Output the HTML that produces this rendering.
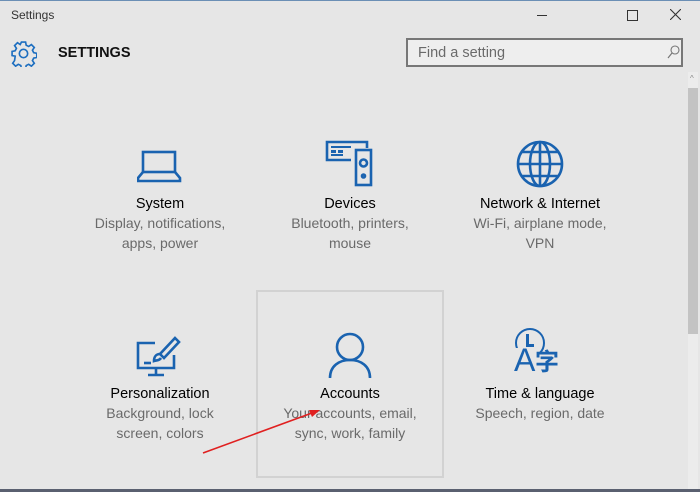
<!DOCTYPE html>
<html><head><style>
body{margin:0;width:700px;height:492px;background:#e6e6e6;font-family:"Liberation Sans","DejaVu Sans",sans-serif;position:relative;overflow:hidden}
.a{position:absolute}
.t{position:absolute;width:190px;text-align:center;font-size:14.5px;line-height:19px;color:#000}
.t span{color:#6a6a6a;font-size:14px}
</style></head><body>
<div class="a" style="left:0;top:0;width:700px;height:1px;background:#6b8fb5"></div>
<div class="a" style="left:11px;top:8px;font-size:12px;color:#333">Settings</div>
<div class="a" style="left:537px;top:15px;width:10px;height:1px;background:#333"></div>
<div class="a" style="left:627px;top:10px;width:9px;height:9px;border:1px solid #333"></div>
<svg class="a" style="left:670px;top:9px" width="11" height="11"><path d="M0 0L11 11M11 0L0 11" stroke="#333" stroke-width="1.1"/></svg>
<svg class="a" style="left:10px;top:40px" width="27" height="27" viewBox="0 0 26 26"><g fill="none" stroke="#1e6fc0" stroke-width="1.6"><path d="M11 2h4l.6 3 2.4 1.2 2.6-1.8 2.8 2.8-1.8 2.6 1.2 2.4 3 .6v4l-3 .6-1.2 2.4 1.8 2.6-2.8 2.8-2.6-1.8-2.4 1.2-.6 3h-4l-.6-3-2.4-1.2-2.6 1.8-2.8-2.8 1.8-2.6L5 15.6l-3-.6v-4l3-.6 1.2-2.4-1.8-2.6 2.8-2.8 2.6 1.8L11 2z"/><circle cx="13" cy="13" r="4"/></g></svg>
<div class="a" style="left:58px;top:45px;font-size:14.5px;font-weight:bold;color:#111">SETTINGS</div>
<div class="a" style="left:406px;top:38px;width:277px;height:29px;box-sizing:border-box;border:2px solid #777;background:#eee"></div>
<div class="a" style="left:418px;top:45px;font-size:14.5px;color:#6a6a6a">Find a setting</div>
<svg class="a" style="left:667px;top:45px" width="13" height="14"><circle cx="8" cy="5" r="4" fill="none" stroke="#777" stroke-width="1.1"/><path d="M5 8L1 13" stroke="#777" stroke-width="1.2"/></svg>
<div class="a" style="left:688px;top:72px;width:10px;height:418px;background:#ececec"></div>
<div class="a" style="left:688px;top:88px;width:10px;height:246px;background:#c3c3c3"></div>
<div class="a" style="left:690px;top:74px;font-size:8px;color:#888">^</div>
<div class="a" style="left:0;top:489px;width:700px;height:3px;background:#5a6070"></div>
<div class="a" style="left:256px;top:290px;width:188px;height:188px;box-sizing:border-box;border:2px solid #d2d2d2"></div>
<svg class="a" style="left:137px;top:148px" width="46" height="36"><g fill="none" stroke="#1a63b0" stroke-width="2.6"><rect x="6" y="4" width="32" height="20"/><path d="M6 24L1 30v3h42v-3l-5-6"/></g></svg>
<svg class="a" style="left:325px;top:140px" width="50" height="48"><g fill="none" stroke="#1a63b0" stroke-width="2.6"><path d="M26 20H2V2h40v6"/><rect x="31" y="10" width="15" height="35"/><circle cx="38.5" cy="23" r="3.5"/><circle cx="38.5" cy="36" r="1.5"/></g><g fill="#1a63b0"><rect x="6" y="6" width="20" height="2"/><rect x="6" y="10" width="5" height="3"/><rect x="13" y="10" width="5" height="3"/><rect x="6" y="14" width="12" height="2"/></g></svg>
<svg class="a" style="left:515px;top:139px" width="50" height="50"><g fill="none" stroke="#1a63b0" stroke-width="2.6"><circle cx="25" cy="25" r="22"/><ellipse cx="25" cy="25" rx="10" ry="22"/><path d="M3 25h44M7 13h36M7 37h36M25 3v44"/></g></svg>
<svg class="a" style="left:135px;top:335px" width="48" height="44"><g fill="none" stroke="#1a63b0" stroke-width="2.6"><path d="M20 8H3v25h36V20"/><path d="M21 33v6M13 40h16"/><path d="M40 3l4 4-15 16-4-4z"/><path d="M25 19c-4 0-6 3-6 7 3-1 5 0 7-3"/><path d="M9 28h7"/></g></svg>
<svg class="a" style="left:327px;top:330px" width="46" height="50"><g fill="none" stroke="#1a63b0" stroke-width="2.6"><circle cx="23" cy="17" r="13"/><path d="M3 48c0-12 9-18 20-18s20 6 20 18"/></g></svg>
<div class="a" style="left:515px;top:328px;width:30px;height:30px;border:2.6px solid #1a63b0;border-radius:50%;box-sizing:border-box"></div>
<div class="a" style="left:526px;top:334px;width:2.5px;height:12px;background:#1a63b0"></div>
<div class="a" style="left:526px;top:344px;width:8px;height:2.5px;background:#1a63b0"></div>
<div class="a" style="left:513px;top:348px;width:24px;height:30px;background:#e6e6e6"></div>
<div class="a" style="left:514px;top:342px;font-size:32px;color:#1a63b0;font-family:'Liberation Sans',sans-serif">A</div>
<div class="a" style="left:535px;top:342px;font-size:24px;font-weight:bold;color:#1a63b0;font-family:'Noto Sans CJK SC',sans-serif">字</div>
<div class="t" style="left:65px;top:195px">System<br><span>Display, notifications,<br>apps, power</span></div>
<div class="t" style="left:255px;top:195px">Devices<br><span>Bluetooth, printers,<br>mouse</span></div>
<div class="t" style="left:445px;top:195px">Network &amp; Internet<br><span>Wi-Fi, airplane mode,<br>VPN</span></div>
<div class="t" style="left:65px;top:385px">Personalization<br><span>Background, lock<br>screen, colors</span></div>
<div class="t" style="left:255px;top:385px">Accounts<br><span>Your accounts, email,<br>sync, work, family</span></div>
<div class="t" style="left:445px;top:385px">Time &amp; language<br><span>Speech, region, date</span></div>
<svg class="a" style="left:0;top:0" width="700" height="492"><path d="M203 453L312 413" stroke="#e02020" stroke-width="1.6"/><path d="M320 410l-11 0 3 7z" fill="#e02020"/></svg>
</body></html>
